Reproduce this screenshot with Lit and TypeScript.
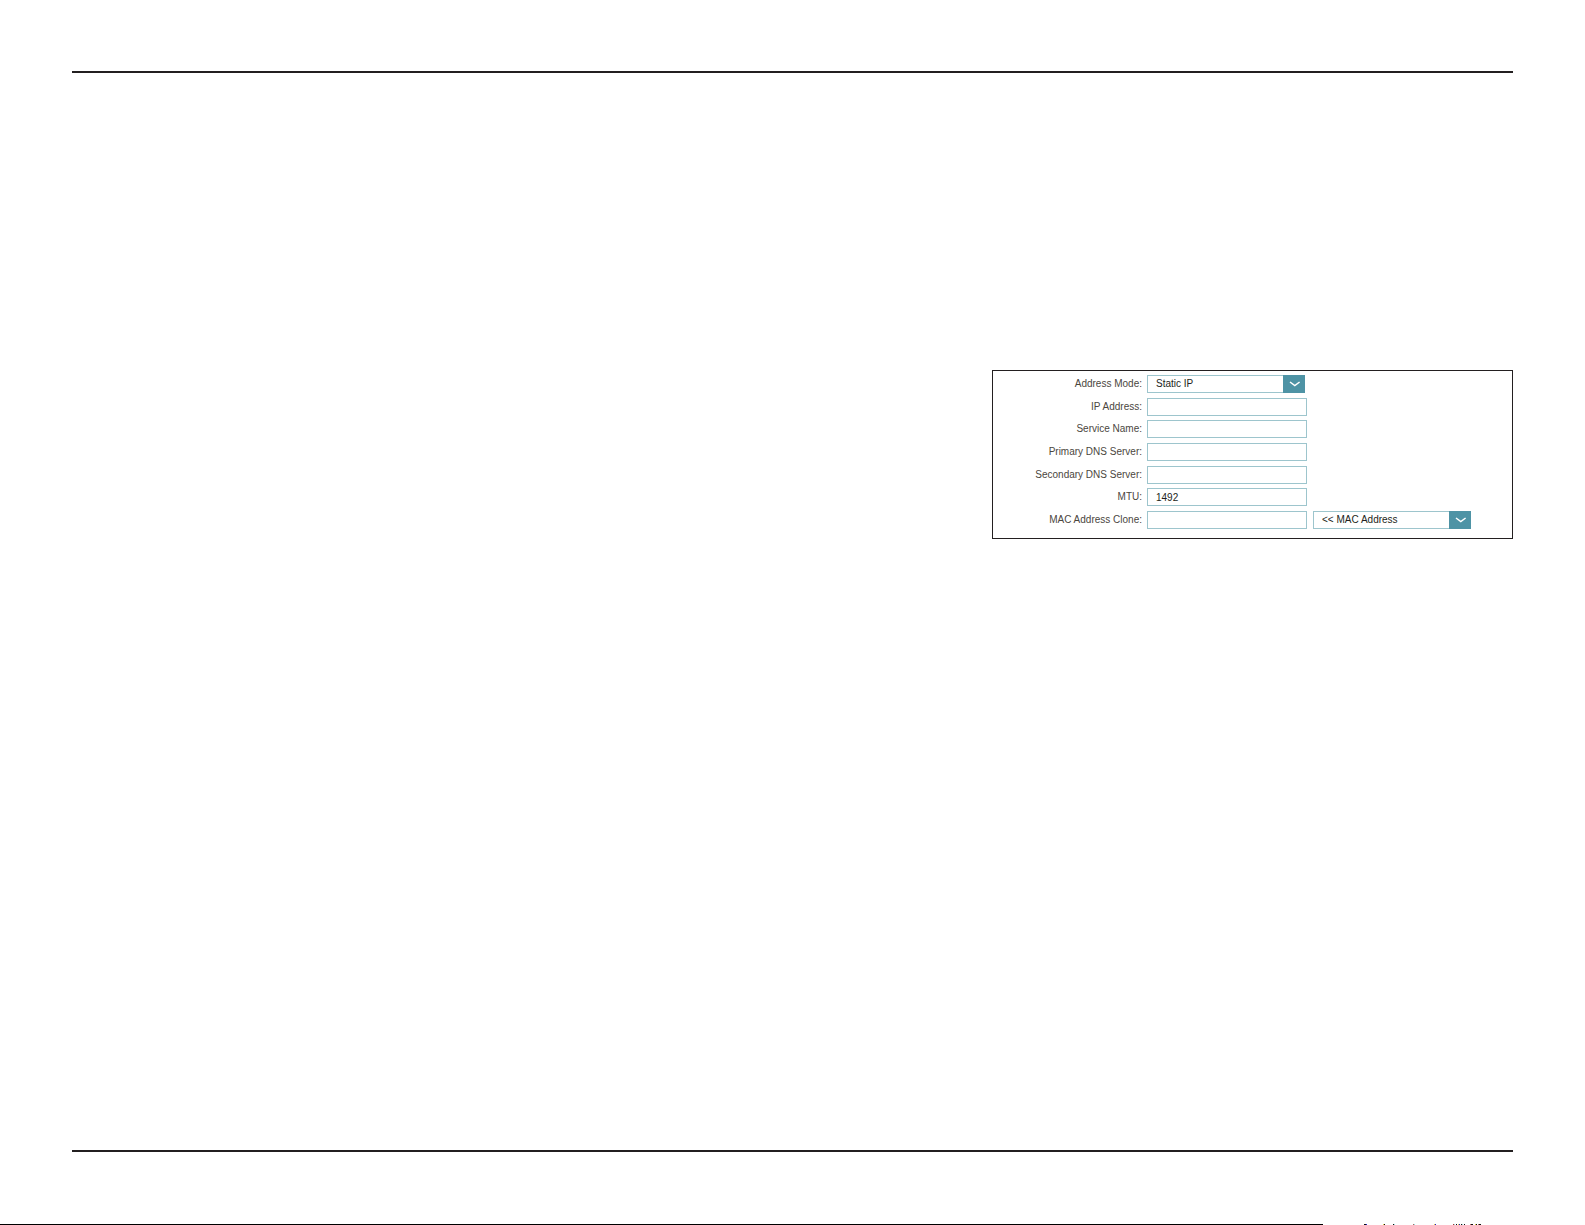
import { LitElement, html, css, svg, nothing } from "lit";
import { customElement } from "lit/decorators.js";

interface Field {
  id: string;
  label: string;
  value?: string;
  options?: string[];
  extra?: { id: string; label: string; options: string[] };
}

const FIELDS: Field[] = [
  { id: "mode", label: "Address Mode:", options: ["Static IP"] },
  { id: "ip", label: "IP Address:" },
  { id: "service", label: "Service Name:" },
  { id: "dns1", label: "Primary DNS Server:" },
  { id: "dns2", label: "Secondary DNS Server:" },
  { id: "mtu", label: "MTU:", value: "1492" },
  {
    id: "mac",
    label: "MAC Address Clone:",
    extra: { id: "mac-pick", label: "MAC Address", options: ["<< MAC Address"] },
  },
];

// Marks on the page's last pixel row: x, width, colour
const TICKS: [number, number, string][] = [
  [41, 2, "#111"], [43, 1, "#22c"], [60, 1, "#dc4"], [61, 1, "#111"],
  [70, 1, "#111"], [71, 1, "#9dd"], [90, 1, "#a66"], [91, 1, "#9dd"],
  [111, 1, "#dc4"], [112, 1, "#22c"], [130, 1, "#a33"], [131, 1, "#9dd"],
  [133, 1, "#111"], [135, 1, "#dc4"], [136, 1, "#22c"], [138, 1, "#111"],
  [139, 1, "#9dd"], [141, 1, "#111"], [147, 1, "#a66"], [148, 2, "#111"],
  [152, 1, "#dc4"], [153, 1, "#111"], [155, 1, "#a66"], [156, 2, "#111"],
];

@customElement("app-root")
export class AppRoot extends LitElement {
  static styles = css`
    :host {
      display: block;
      font-family: "Liberation Sans", Arial, sans-serif;
      font-size: 10px;
      line-height: 12px;
      color: #4b463e;
      background: #fff;
    }
    * {
      box-sizing: border-box;
    }
    .page {
      min-height: 100vh;
      display: flex;
      flex-direction: column;
    }
    .sheet {
      flex: 1;
      display: flex;
      flex-direction: column;
      padding: 71px 72px 72px;
    }
    .rule {
      width: 100%;
      height: 2px;
      margin: 0;
      border: 0;
      background: #231f20;
    }
    .body {
      flex: 1;
      padding-top: 297px;
    }
    .panel {
      width: 521px;
      max-width: 100%;
      min-height: 169px;
      margin-left: auto;
      padding: 4px 0 9px;
      border: 1px solid #231f20;
      display: flex;
      flex-direction: column;
      justify-content: space-between;
      gap: 4px;
    }
    .row {
      display: grid;
      grid-template-columns: 149px 161px 159px;
      column-gap: 5px;
      align-items: center;
    }
    .row label {
      text-align: right;
    }
    .row .control {
      display: block;
      width: 160px;
      height: 18px;
      margin: 0;
      padding: 0 8px;
      border: 1px solid #9dc5cd;
      border-radius: 0;
      background: #fff;
      color: #231f20;
      font: inherit;
      appearance: none;
      outline: none;
    }
    .pick {
      position: relative;
      width: 158px;
    }
    .pick .control {
      width: 100%;
    }
    .pick .arrow {
      position: absolute;
      top: 0;
      right: 0;
      width: 22px;
      height: 100%;
      background: #4e93a5;
      pointer-events: none;
    }
    .foot {
      display: flex;
      height: 1px;
    }
    .bar {
      flex: 1;
      background: #000;
    }
    .ticks {
      display: block;
      width: 262px;
      height: 1px;
    }
  `;

  private pick(id: string, options: string[], label?: string) {
    return html`<div class="pick">
      <select class="control" id=${id} aria-label=${label ?? nothing}>
        ${options.map((o) => html`<option>${o}</option>`)}
      </select>
      <svg class="arrow" viewBox="0 0 22 18" aria-hidden="true">
        <path d="M7 7 L11.8 10.6 L16.6 7" fill="none" stroke="#fff" stroke-width="1.5" />
      </svg>
    </div>`;
  }

  private row(f: Field) {
    return html`<div class="row">
      <label for=${f.id}>${f.label}</label>
      ${f.options
        ? this.pick(f.id, f.options)
        : html`<input class="control" type="text" id=${f.id} .value=${f.value ?? ""} />`}
      ${f.extra ? this.pick(f.extra.id, f.extra.options, f.extra.label) : nothing}
    </div>`;
  }

  render() {
    return html`<div class="page">
      <main class="sheet">
        <hr class="rule" />
        <div class="body">
          <form class="panel">${FIELDS.map((f) => this.row(f))}</form>
        </div>
        <hr class="rule" />
      </main>
      <div class="foot">
        <div class="bar"></div>
        <svg class="ticks" viewBox="0 0 262 1" shape-rendering="crispEdges" aria-hidden="true">
          ${TICKS.map(([x, w, c]) => svg`<rect x=${x} y="0" width=${w} height="1" fill=${c} />`)}
        </svg>
      </div>
    </div>`;
  }
}
